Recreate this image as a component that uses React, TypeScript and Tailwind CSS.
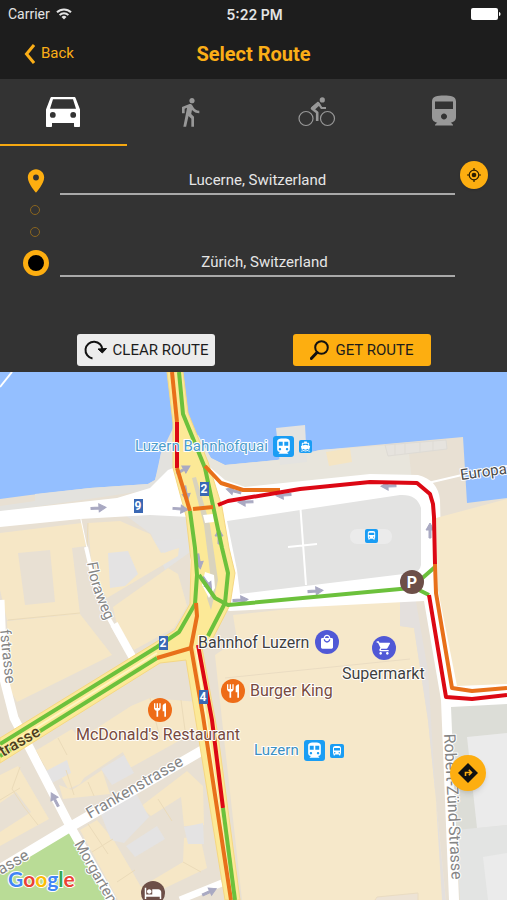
import { FormEvent, useState } from 'react';
import {
  MdDirectionsBoat,
  MdDirectionsBus,
  MdDirectionsRailway,
  MdDirectionsTransit,
  MdDirectionsWalk,
  MdHotel,
  MdLocalMall,
  MdPlace,
  MdRestaurant,
  MdShoppingCart,
} from 'react-icons/md';

function CarIcon() {
  return (
    <svg width="34" height="30" viewBox="0 0 34 30" fill="currentColor">
      <path
        fillRule="evenodd"
        d="M6 0h22c.9 0 1.500.4 1.700 1.200L34 12.500V29c0 .6-.4 1-1 1h-4c-.6 0-1-.4-1-1v-3H6v3c0 .6-.4 1-1 1H1c-.6 0-1-.4-1-1V12.500L4.300 1.200C4.500.4 5.100 0 6 0zM7 2.300 4 11.800h26L27 2.300zM6.800 15a2.900 2.900 0 1 0 0 5.800 2.900 2.900 0 0 0 0-5.800zm20.400 0a2.900 2.900 0 1 0 0 5.800 2.900 2.900 0 0 0 0-5.800z"
      />
    </svg>
  );
}

function BikeIcon() {
  return (
    <svg width="38" height="30" viewBox="0 0 38 30" fill="none" stroke="currentColor">
      <circle cx="8" cy="21.500" r="7" strokeWidth="1.200" />
      <circle cx="29.500" cy="21.500" r="7" strokeWidth="1.200" />
      <circle cx="24.300" cy="2.900" r="2.600" fill="currentColor" stroke="none" />
      <path d="M20.500 6 14 11.500l5.200 4V24" strokeWidth="2.600" strokeLinejoin="round" />
      <path d="M20 5.500l3.500 5.500H28" strokeWidth="2.200" strokeLinejoin="round" />
      <path d="M13 10.500 20 4.500l2.500 3-5.500 5z" fill="currentColor" stroke="none" />
    </svg>
  );
}

function WifiIcon() {
  return (
    <svg width="16" height="12" viewBox="0 0 16 12" fill="none" stroke="currentColor" strokeWidth="2">
      <path d="M1 4.300a10 10 0 0 1 14 0M3.600 7.100a6.300 6.300 0 0 1 8.800 0" />
      <path d="M8 11.500 5.500 9a3.600 3.600 0 0 1 5 0z" fill="currentColor" stroke="none" />
    </svg>
  );
}

function Target() {
  return (
    <svg width="14" height="14" viewBox="0 0 14 14" fill="none" stroke="#2b1d00" strokeWidth="1.200">
      <circle cx="7" cy="7" r="4.800" />
      <circle cx="7" cy="7" r="2.300" fill="#2b1d00" stroke="none" />
      <path d="M7 0v2.500M7 11.500V14M0 7h2.500M11.500 7H14" />
    </svg>
  );
}

const modes = [
  { id: 'car', label: 'Drive', icon: <CarIcon /> },
  { id: 'walk', label: 'Walk', icon: <MdDirectionsWalk size={32} /> },
  { id: 'bike', label: 'Bike', icon: <BikeIcon /> },
  { id: 'train', label: 'Train', icon: <MdDirectionsRailway size={36} /> },
];

const buildings = [
  '0,533 82,523 86,546 72,548 80,614 7,620 0,590',
  '88,523 120,521 150,534 161,553 179,548 178,556 107,598 92,572',
  '113,607 168,568 178,574 187,606 174,628 134,650 117,625',
  '7,621 80,614 112,655 17,702 10,690',
  '35,751 72,729 80,739 131,706 150,698 198,702 202,728 130,768 123,752 84,778 80,784 68,789 62,778 51,776',
  '72,790 102,770 110,794 63,799 59,785',
  '0,775 18,766 49,819 0,846',
  '80,830 97,820 113,839 133,873 141,887 183,862 184,838 200,836 207,868 140,900 118,900',
  '140,807 187,771 203,786 204,825 184,826 181,797 151,816',
];

const greyBlocks = [
  '108,553 128,551 138,574 125,586 110,588',
  '155,541 180,539 180,547 164,553',
  '46,771 67,760 71,773 50,784',
  '101,769 124,755 134,773 112,785',
  '100,812 136,793 149,817 124,843 111,840',
  '126,846 157,826 165,839 135,857',
  '184,827 203,823 204,844 188,844',
];

// thin property lines inside the blocks
const seams =
  'M36 751l8 15M58 738l9 17M150 698l10 40M181 700l4 30M66 770l8 25M88 782l6 14M0 800l20-12M20 767l-8 22 12 18M24 807l14 18M88 824l20 30M113 839l-21 13M135 870l-18 12M183 862l18 10M8 620l72-7M88 523l-1 22M158 799l14 22';

const serious = '#dc0814';
const slow = '#e8701a';
const clear = '#6cc13c';

const traffic = [
  { d: 'M172 372 177 422', color: slow },
  { d: 'M177 422V468', color: serious },
  { d: 'M177 468 190 511', color: slow },
  { d: 'M190 511 195 548 197 575 195 604 179 632 157 647 0 744', color: clear },
  { d: 'M157 658 0 756', color: clear },
  { d: 'M179 372 183 414 205 468 222 548 228 573 225 603 208 636', color: clear },
  { d: 'M199 575 215 598 228 605 411 588 435 567', color: clear },
  { d: 'M411 586 429 595', color: clear },
  { d: 'M196 603 197 616 191 647 203 716 231 900', color: slow },
  { d: 'M157 658 191 648', color: slow },
  { d: 'M198 645 212 720 223 808', color: serious },
  { d: 'M223 808 235 900', color: clear },
  { d: 'M193 509 213 507', color: slow },
  { d: 'M205 466 221 483 243 490 280 490', color: slow },
  { d: 'M218 505 228 501 300 489 370 482 417 483 430 494 433 504 434 517 435 564', color: serious },
  { d: 'M435 564 436 593 452 688 472 691 507 688', color: slow },
  { d: 'M429 595 446 697 472 699 507 695', color: serious },
];

const arrows = [
  { x: 98, y: 508, r: -4 },
  { x: 180, y: 509, r: 5 },
  { x: 183, y: 470, r: -30 },
  { x: 186, y: 493, r: 80 },
  { x: 234, y: 491, r: 195 },
  { x: 246, y: 502, r: 178 },
  { x: 284, y: 495, r: 175 },
  { x: 389, y: 486, r: 178 },
  { x: 430, y: 531, r: -90 },
  { x: 219, y: 537, r: -90 },
  { x: 199, y: 561, r: 80 },
  { x: 207, y: 583, r: 55 },
  { x: 240, y: 600, r: -5 },
  { x: 315, y: 591, r: -5 },
  { x: 55, y: 800, r: -118 },
  { x: 209, y: 892, r: -25 },
];

function RoadShield({ x, y, label }: { x: number; y: number; label: string }) {
  return (
    <g>
      <rect x={x - 4} y={y - 7} width="9" height="14" fill="#3a68b4" />
      <text x={x} y={y + 4} textAnchor="middle" fontSize="12" fontWeight="700" fill="#fff">
        {label}
      </text>
    </g>
  );
}

function CityMap() {
  return (
    <svg
      viewBox="0 372 507 528"
      className="block h-auto w-full font-['Roboto','Noto_Sans',sans-serif]"
      role="img"
      aria-label="Map of Lucerne"
    >
      <rect y="372" width="507" height="528" fill="#94bfff" />
      <path d="M0 387 12 372" stroke="#fff" strokeWidth="2" />

      {/* shore and ground */}
      <path d="M0 499 30 495 90 488 148 484 155 480 158 470 161 453 173 428 198 435 211 458 225 465 277 460 320 450 463 437 467 503 507 498V900H0z" fill="#e8e0d3" />
      <path d="M35 494 90 488 148 484 155 480 161 453 173 435V470L150 490 0 512V506L35 501z" fill="#e3e2de" />
      <path d="M198 435 211 458 225 465 277 460 320 450 408 444 412 482 240 492 205 465z" fill="#e8e5dc" />
      <path d="M276 428 305 425 307 462 280 465z" fill="#e4e3e0" />
      <path d="M326 452 350 448 352 462 329 466z" fill="#f5e5c3" />
      <path d="M385 445 446 440 447 449 388 456zM395 444v11M405 443v11M420 442v11M433 441v10" fill="#e6e3de" stroke="#dedbd5" />
      <path d="M125 515 190 512 193 550 165 570 151 534z" fill="#e4e3e1" />

      {buildings.map((points) => (
        <polygon key={points} points={points} fill="#f6e7c6" />
      ))}
      <polygon points="18,553 50,550 55,602 25,605" fill="#e8e0d3" />
      <polygon points="0,803 16,792 31,812 0,832" fill="#e8e0d3" />
      {greyBlocks.map((points) => (
        <polygon key={points} points={points} fill="#e4e3e3" />
      ))}
      <path d={seams} fill="none" stroke="#ebdbb9" strokeWidth="1" />
      <path d="M0 868 70 830 108 900H0z" fill="#b9dc96" />

      {/* station block and the land right of it */}
      <path d="M233 615 400 597V626L414 628 428 720 446 900H242L222 720 215 655 237 640z" fill="#f6e8ca" />
      <path d="M225 678 410 659M375 900l2-3 41-4v7" fill="#ede3d5" stroke="#eadcc2" />
      <path d="M400 596h15l13 75 14 229h4L428 720 414 628 400 626z" fill="#e4e0dd" />
      <path d="M450 701 507 699V900H460z" fill="#dcddd7" />
      <path d="M456 830 507 825V900H460z" fill="#e3e4e3" />
      <path d="M467 737 507 733V825L477 828zM483 857 507 853V900H488z" fill="#ebebeb" />

      {/* streets */}
      <path d="M0 511 117 498 150 488 168 470 178 466 205 463 225 480 245 487 370 474 418 475Q438 480 440 500L442 590 457 680 507 676V704L451 707 459 900H449L441 700 424 601 230 611 190 600V517L150 515 80 519 0 527z" fill="#fff" />
      <path d="M227 521 400 495Q417 494 421 508V565Q420 572 412 573L240 594 237 570z" fill="#e3e3e2" />
      <path d="M436 518 507 499V684L457 686 438 590z" fill="#f6e8ca" />
      <g fill="none" stroke="#fff">
        <path d="M300 502 306 585M288 547 317 544" strokeWidth="2" />
        <path d="M428 483 462 475 507 466" strokeWidth="2" />
        <path d="M80 515 87 548 93 575" strokeWidth="1" />
        <path d="M86 547 96 590 108 617 124 645" strokeWidth="4" />
        <path d="M114 624 134 660" strokeWidth="8" />
        <path d="M0 600 3 675 14 718 70 826 112 900" strokeWidth="9" />
        <path d="M0 869 70 827 208 747" strokeWidth="10" />
        <path d="M180 900 222 883" strokeWidth="7" />
      </g>
      <rect x="350" y="529" width="42" height="15" rx="7" fill="#ebebeb" />

      {/* main road */}
      <path d="M167 372H183L188 413 208 462 222 507 229 548 235 573 230 605 213 638 202 648 218 735 240 900H225L196 722 186 660 160 663 0 763V738L153 644 175 630 190 604 191 560 186 516 173 468V423z" fill="#fce997" stroke="#f5d783" strokeWidth="1" />
      <path d="M192 478 196 477 210 525 218 580 211 610 207 598 211 580 204 525z" fill="#d9d3bd" />
      <path d="M203 515 213 514 214 522 205 523zM205 572 214 575 215 588 209 598 202 585z" fill="#fff" />
      <path d="M0 750 157 653M196 648 232 900" fill="none" stroke="#fff6c3" strokeWidth="2" />

      {arrows.map((a) => (
        <path
          key={`${a.x}-${a.y}`}
          d="M-7-1H1V-4L8 0 1 4V1H-7z"
          fill="#a9a9c2"
          stroke="#a9a9c2"
          strokeWidth="1"
          transform={`translate(${a.x} ${a.y}) rotate(${a.r})`}
        />
      ))}

      {traffic.map((t) => (
        <path key={t.d} d={t.d} fill="none" stroke={t.color} strokeWidth="4" strokeLinejoin="round" />
      ))}

      <RoadShield x={138} y={506} label="9" />
      <RoadShield x={204} y={489} label="2" />
      <RoadShield x={163} y={643} label="2" />
      <RoadShield x={203} y={697} label="4" />

      {/* street names */}
      <defs>
        <path id="floraweg" d="M87 563Q92 600 122 650" />
      </defs>
      <g fill="#858585" fontSize="15" stroke="#fff" strokeWidth="2" strokeLinejoin="round" paintOrder="stroke">
        <text>
          <textPath href="#floraweg">Floraweg</textPath>
        </text>
        <text transform="translate(90 819) rotate(-30)" fontSize="16">Frankenstrasse</text>
        <text transform="translate(1 875) rotate(-30)" fontSize="16">asse</text>
        <text transform="translate(74 844) rotate(60)">Morgarten</text>
        <text transform="translate(0 630) rotate(84)">fstrasse</text>
        <text transform="translate(444 734) rotate(87)" fontSize="16">Robert-Zünd-Strasse</text>
        <text transform="translate(461 480) rotate(-8)" fill="#4a4a4a">Europa</text>
        <text transform="translate(3 757) rotate(-30)" fill="#4d3d20" stroke="#fdeea8" fontWeight="500" fontSize="16">
          trasse
        </text>
      </g>

      {/* places */}
      <g fontSize="16" stroke="#fff" strokeWidth="2" strokeLinejoin="round" paintOrder="stroke">
        <text x="135" y="451" fill="#4c9ccc" fontSize="15">Luzern Bahnhofquai</text>
        <text x="254" y="755" fill="#3c8fc2" fontSize="15">Luzern</text>
        <text x="198" y="648" fill="#3f3f3f">Bahnhof Luzern</text>
        <text x="342" y="679" fill="#3f3f3f">Supermarkt</text>
        <text x="250" y="696" fill="#774a40">Burger King</text>
        <text x="76" y="740" fill="#774a40">McDonald's Restaurant</text>
      </g>

      <rect x="273" y="436" width="21" height="21" rx="3" fill="#1a9df4" />
      <MdDirectionsTransit x={274} y={437} size={19} color="#fff" />
      <rect x="299" y="440" width="13" height="13" rx="2" fill="#1a9df4" />
      <MdDirectionsBoat x={300} y={441} size={11} color="#fff" />
      <rect x="365" y="529" width="13" height="14" rx="2" fill="#1a9df4" />
      <MdDirectionsBus x={366} y={530} size={11} color="#fff" />
      <rect x="304" y="740" width="21" height="21" rx="3" fill="#1a9df4" />
      <MdDirectionsTransit x={305} y={741} size={19} color="#fff" />
      <rect x="330" y="744" width="14" height="14" rx="2" fill="#1a9df4" />
      <MdDirectionsBus x={331} y={745} size={12} color="#fff" />

      <circle cx="327" cy="642" r="12" fill="#5058d6" />
      <MdLocalMall x={319} y={634} size={16} color="#fff" />
      <circle cx="384" cy="648" r="12" fill="#5058d6" />
      <MdShoppingCart x={376} y={640} size={16} color="#fff" />
      <circle cx="233" cy="691" r="12" fill="#ee6c17" />
      <MdRestaurant x={225} y={683} size={16} color="#fff" />
      <circle cx="160" cy="710" r="12" fill="#ee6c17" />
      <MdRestaurant x={152} y={702} size={16} color="#fff" />
      <circle cx="153" cy="893" r="12" fill="#6d4f48" />
      <MdHotel x={144} y={884} size={18} color="#fff" />
      <circle cx="412" cy="582" r="12" fill="#6d4f48" />
      <text x="412" y="588" textAnchor="middle" fontSize="16" fontWeight="700" fill="#fff">P</text>

      <text
        x="8"
        y="887"
        fontSize="21"
        fontWeight="700"
        stroke="#fff"
        strokeWidth="2"
        paintOrder="stroke"
        className="font-['Lato',sans-serif]"
      >
        <tspan fill="#4285f4">G</tspan>
        <tspan fill="#ea4335">o</tspan>
        <tspan fill="#fbbc05">o</tspan>
        <tspan fill="#4285f4">g</tspan>
        <tspan fill="#34a853">l</tspan>
        <tspan fill="#ea4335">e</tspan>
      </text>
    </svg>
  );
}

export default function App() {
  const [mode, setMode] = useState('car');
  const [from, setFrom] = useState('Lucerne, Switzerland');
  const [to, setTo] = useState('Zürich, Switzerland');

  const clearRoute = () => {
    setFrom('');
    setTo('');
  };

  const inputClass =
    'h-7 w-full border-b-2 border-[#a9a9a9] bg-transparent text-center text-[15px] text-[#e6e6e6] outline-none';

  return (
    <div className="w-full bg-[#333333] font-['Roboto','Noto_Sans',sans-serif]">
      <header className="bg-[#1d1d1d]">
        <div className="grid h-7 grid-cols-3 items-center pr-1.5 pl-2 text-[14px] text-[#e4e4e4]">
          <div className="flex items-center gap-1.5">
            <span>Carrier</span>
            <WifiIcon />
          </div>
          <span className="text-center font-['Inter',sans-serif] text-[14px] font-semibold">5:22 PM</span>
          <svg width="30" height="12" viewBox="0 0 30 12" fill="#fff" className="justify-self-end">
            <rect width="27" height="12" rx="2" />
            <path d="M28 4c2 0 2 4 0 4z" />
          </svg>
        </div>
        <div className="grid h-[51px] grid-cols-3 items-center px-6 text-[#fbae17]">
          <button type="button" className="flex items-center gap-1.5 text-[15px]">
            <svg width="11" height="20" viewBox="0 0 11 20" fill="none" stroke="currentColor" strokeWidth="3">
              <path d="M10 1 2.500 10 10 19" />
            </svg>
            Back
          </button>
          <h1 className="text-center text-[20px] font-bold whitespace-nowrap">Select Route</h1>
        </div>
      </header>

      <nav className="grid h-[67px] grid-cols-4">
        {modes.map((m) => (
          <button
            key={m.id}
            type="button"
            aria-label={m.label}
            onClick={() => setMode(m.id)}
            className={
              m.id === mode
                ? 'flex items-center justify-center border-b-2 border-[#f5a811] text-white'
                : 'flex items-center justify-center border-b-2 border-transparent text-[#989898]'
            }
          >
            {m.icon}
          </button>
        ))}
      </nav>

      <form onSubmit={(e: FormEvent) => e.preventDefault()} className="pt-3">
        <div className="flex h-[37px] items-end pl-[22px]">
          <MdPlace size={28} color="#fdae10" className="mr-2.5 shrink-0" />
          <input
            aria-label="From"
            value={from}
            onChange={(e) => setFrom(e.target.value)}
            className={inputClass}
          />
          <div className="w-[52px] shrink-0 self-start pl-[5px]">
            <button
              type="button"
              aria-label="Use my location"
              className="mt-[3px] flex size-7 items-center justify-center rounded-full bg-[#fdae10] shadow"
            >
              <Target />
            </button>
          </div>
        </div>
        <div className="ml-[21px] flex h-[54px] w-7 flex-col items-center gap-3 pt-2.5">
          <span className="size-2.5 rounded-full border border-[#8a651f]" />
          <span className="size-2.5 rounded-full border border-[#8a651f]" />
        </div>
        <div className="flex items-center pr-[52px] pl-[23px]">
          <span className="mr-[11px] size-[26px] shrink-0 rounded-full border-[5px] border-[#fdae10] bg-black" />
          <input
            aria-label="To"
            value={to}
            onChange={(e) => setTo(e.target.value)}
            className={`${inputClass} pl-3.5`}
          />
        </div>
        <div className="grid grid-cols-2 justify-items-center pt-[57px] pr-[37px] pb-1.5 pl-[38px] text-[15px] text-[#1c1c1c]">
          <button
            type="button"
            onClick={clearRoute}
            className="flex h-8 w-[138px] items-center justify-center gap-1.5 rounded-[3px] bg-[#ececec] whitespace-nowrap"
          >
            <svg width="23" height="20" viewBox="0 0 23 20" fill="none" stroke="#111" strokeWidth="2">
              <path d="M8.500 18.500A8.500 8.500 0 1 1 18.500 10" />
              <path d="M14 9 22.500 8.500 18.300 13z" fill="#111" strokeWidth="1" />
            </svg>
            CLEAR ROUTE
          </button>
          <button
            type="submit"
            className="flex h-8 w-[138px] items-center justify-center gap-1.5 rounded-[3px] bg-[#fdae10] whitespace-nowrap"
          >
            <svg width="19" height="20" viewBox="0 0 19 20" fill="none" stroke="#111">
              <circle cx="11.500" cy="7.500" r="6.300" strokeWidth="2" />
              <path d="M7 12.500 1.300 18.500" strokeWidth="3" strokeLinecap="round" />
            </svg>
            GET ROUTE
          </button>
        </div>
      </form>

      <main className="relative">
        <CityMap />
        <button
          type="button"
          aria-label="Directions"
          className="absolute right-[21px] bottom-[109px] flex size-9 items-center justify-center rounded-full bg-[#fdae10] shadow-md"
        >
          <svg width="20" height="20" viewBox="0 0 20 20" fill="none">
            <path d="M10 0 20 10 10 20 0 10z" fill="#111" />
            <path d="M7.500 13V9.500H13M10.800 6.800 13.500 9.500 10.800 12.200" stroke="#fdae10" strokeWidth="1.600" />
          </svg>
        </button>
      </main>
    </div>
  );
}
